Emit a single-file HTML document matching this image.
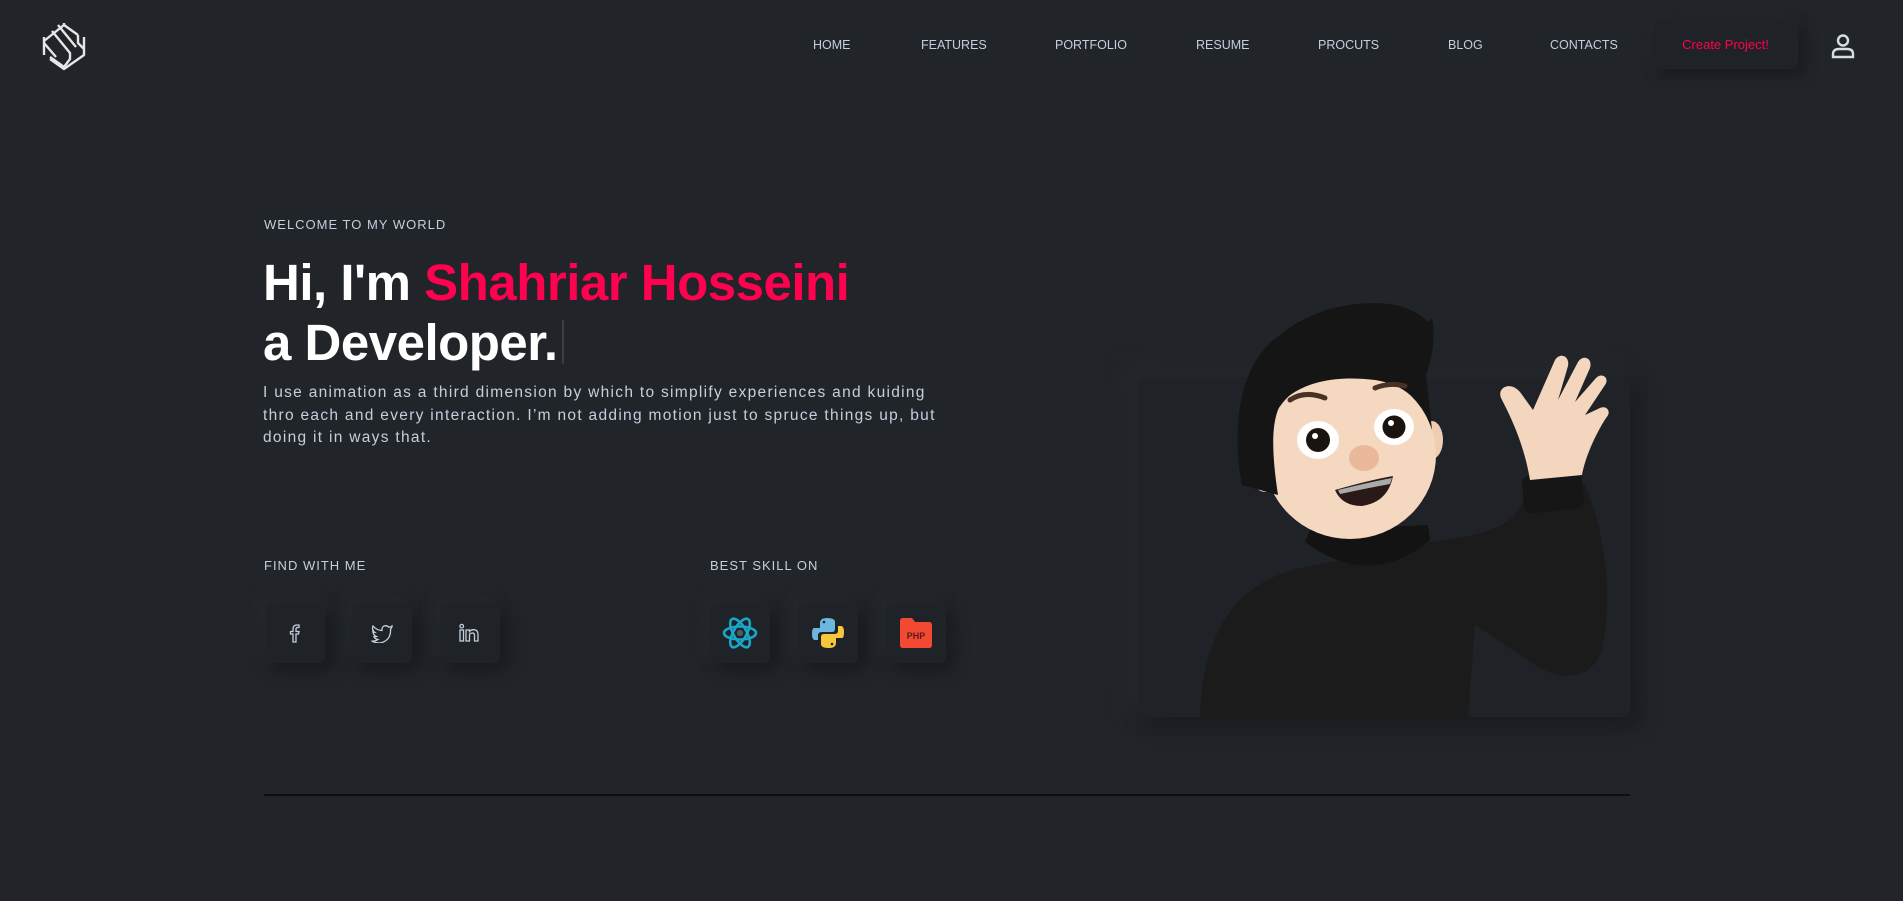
<!DOCTYPE html>
<html><head><meta charset="utf-8"><style>
*{margin:0;padding:0;box-sizing:border-box}
body{width:1903px;height:901px;background:#212428;font-family:"Liberation Sans",sans-serif;position:relative;overflow:hidden;color:#c4cfde}
.nav a{position:absolute;top:38px;font-size:12.5px;color:#c4cfde;text-decoration:none}
.btn{position:absolute;left:1653px;top:21px;width:145px;height:48px;background:#1f2226;border-radius:6px;box-shadow:6px 6px 14px #191b1e,-4px -4px 12px #25282d;color:#ff014f;font-size:13px;text-align:center;line-height:48px}
.small{position:absolute;font-size:13px;letter-spacing:1px;color:#c4cfde}
h1{position:absolute;left:263px;top:253px;font-size:51px;line-height:60px;font-weight:600;color:#fff;letter-spacing:-.5px}
h1 span{color:#ff014f}
p.d{position:absolute;left:263px;top:382px;white-space:nowrap;font-size:15.5px;line-height:22.5px;color:#c4cfde;letter-spacing:1.3px}
.box{position:absolute;top:603px;width:60px;height:60px;background:#1f2226;border-radius:6px;box-shadow:8px 8px 16px #191b1e,-6px -6px 14px #262a2e;display:flex;align-items:center;justify-content:center}
</style></head><body>
<svg style="position:absolute;left:40px;top:21px" width="48" height="50" viewBox="0 0 48 50" fill="none" stroke="#e6e6e6" stroke-width="2.4" stroke-linejoin="round">
<path d="M4 16 L4 34 M4 20 L24 4 L38 14 M24 4 L24 2"/>
<path d="M12 10 L30 32 L30 38 L24 46 L10 36"/>
<path d="M18 4 L36 26 M44 16 L44 34 L24 48 L10 38"/>
<path d="M4 22 L16 36 M38 14 L38 22 L44 28"/>
</svg>
<div class="nav">
<a style="left:813px">HOME</a><a style="left:921px">FEATURES</a><a style="left:1055px">PORTFOLIO</a><a style="left:1196px">RESUME</a><a style="left:1318px">PROCUTS</a><a style="left:1448px">BLOG</a><a style="left:1550px">CONTACTS</a>
</div>
<div class="btn">Create Project!</div>
<svg style="position:absolute;left:1831px;top:33px" width="24" height="26" viewBox="0 0 24 26" fill="none" stroke="#d8dde4" stroke-width="2.4"><circle cx="12" cy="7.5" r="5"/><path d="M2 24 L2 21 Q2 16 8 16 L16 16 Q22 16 22 21 L22 24 Z"/></svg>

<div class="small" style="left:264px;top:217px">WELCOME TO MY WORLD</div>
<h1>Hi, I'm <span>Shahriar Hosseini</span><br>a Developer.<span style="display:inline-block;width:2px;height:44px;background:#3a3e44;vertical-align:-4px;margin-left:4px"></span></h1>
<p class="d">I use animation as a third dimension by which to simplify experiences and kuiding<br>thro each and every interaction. I’m not adding motion just to spruce things up, but<br>doing it in ways that.</p>

<div class="small" style="left:264px;top:558px">FIND WITH ME</div>
<div class="small" style="left:710px;top:558px">BEST SKILL ON</div>

<div class="box" style="left:265px"><svg width="16" height="20" viewBox="0 0 16 20" fill="none" stroke="#c4cfde" stroke-width="1.3"><path d="M6 19 L6 11 L3.5 11 L3.5 8.5 L6 8.5 L6 6 Q6 2 10 2 L12 2 L12 4.5 L10.5 4.5 Q9 4.5 9 6 L9 8.5 L12 8.5 L11.5 11 L9 11 L9 19 Z"/></svg></div>
<div class="box" style="left:352px"><svg width="24" height="20" viewBox="0 0 24 20" fill="none" stroke="#c4cfde" stroke-width="1.3"><path d="M22 3 Q20.5 4 19 4.3 Q17 2 14 3 Q11.5 4.5 12 7.5 Q7 7.5 3 3 Q1.5 7 5 9.5 Q3.5 9.5 3 9 Q3.5 12.5 6.5 13.5 Q5 14 4 13.8 Q5 16 8 16.5 Q5 18.5 1.5 18 Q12 23 18.5 15 Q21 11 20.5 6 Q22 5 22 3 Z"/></svg></div>
<div class="box" style="left:440px"><svg width="24" height="20" viewBox="0 0 24 20" fill="none" stroke="#c4cfde" stroke-width="1.3"><rect x="2" y="7" width="3.5" height="11"/><circle cx="3.7" cy="3.2" r="1.8"/><path d="M8 18 L8 7 L11.5 7 L11.5 8.5 Q13 6.5 16 6.7 Q20 7 20 11.5 L20 18 L16.5 18 L16.5 12 Q16.5 10 14.5 10 Q11.5 10 11.5 12.5 L11.5 18 Z"/></svg></div>

<div class="box" style="left:710px"><svg width="36" height="36" viewBox="0 0 36 36" fill="none" stroke="#1aa6c9" stroke-width="2.6"><ellipse cx="18" cy="18" rx="16" ry="6.5"/><ellipse cx="18" cy="18" rx="16" ry="6.5" transform="rotate(60 18 18)"/><ellipse cx="18" cy="18" rx="16" ry="6.5" transform="rotate(-60 18 18)"/><circle cx="18" cy="18" r="3.2" fill="#4a5a66" stroke="none"/></svg></div>
<div class="box" style="left:798px"><svg width="36" height="36" viewBox="0 0 36 36"><path d="M17 3 Q10 3 10 8 L10 13 L4 13 Q2 13 2 19 Q2 25 5 25 L8 25 L8 20 Q8 17 12 17 L22 17 Q25 17 25 14 L25 7 Q25 3 17 3 Z" fill="#6cb6e0"/><path d="M19 33 Q26 33 26 28 L26 23 L32 23 Q34 23 34 17 Q34 11 31 11 L28 11 L28 16 Q28 19 24 19 L14 19 Q11 19 11 22 L11 29 Q11 33 19 33 Z" fill="#f6c73a"/><circle cx="14" cy="7" r="1.3" fill="#1f2226"/><circle cx="22" cy="29" r="1.3" fill="#1f2226"/></svg></div>
<div class="box" style="left:886px"><svg width="36" height="34" viewBox="0 0 36 34"><path d="M2 5 Q2 2 5 2 L14 2 L17 6 L31 6 Q34 6 34 9 L34 29 Q34 32 31 32 L5 32 Q2 32 2 29 Z" fill="#f24a32"/><text x="18" y="23" text-anchor="middle" font-family="Liberation Sans,sans-serif" font-weight="bold" font-size="9" fill="#5a1a12">PHP</text></svg></div>

<div style="position:absolute;left:1138px;top:377px;width:492px;height:340px;background:#1f2226;border-radius:6px;box-shadow:10px 10px 20px #1a1c1f,-10px -10px 24px #262a2e"></div>
<svg style="position:absolute;left:1130px;top:280px" width="510" height="450" viewBox="0 0 510 450">
<path d="M70 437 C72 360 100 305 170 288 L300 262 C350 255 385 250 395 215 L455 205 C478 260 482 320 472 370 C462 400 430 402 405 385 L345 345 L338 437 Z" fill="#1b1b1c"/>
<rect x="393" y="193" width="60" height="38" rx="8" transform="rotate(-6 423 212)" fill="#161616"/>
<path d="M175 262 Q240 310 300 260 L298 245 L180 250 Z" fill="#131313"/>
<path d="M400 200 C395 170 385 145 372 120 C365 108 380 100 390 112 L403 130 L425 80 C430 72 440 76 438 86 L428 120 L448 82 C453 74 463 78 460 88 L445 122 L466 98 C472 92 480 98 475 105 L455 135 L470 128 C477 125 482 132 476 138 C465 155 455 178 452 195 Z" fill="#f3d6bd"/>
<ellipse cx="135" cy="190" rx="15" ry="22" fill="#efcdb2"/>
<ellipse cx="302" cy="160" rx="11" ry="19" fill="#efcdb2"/>
<ellipse cx="220" cy="175" rx="86" ry="84" fill="#f4d8c0"/>
<path d="M112 205 C100 140 112 80 150 55 C180 30 220 20 260 24 C285 28 296 40 298 42 L302 38 C306 55 302 80 296 95 L302 150 C292 120 275 105 245 100 C205 95 172 102 152 122 C140 140 142 175 148 215 Z" fill="#151515"/>
<path d="M160 120 Q175 110 195 118" stroke="#4a3126" stroke-width="5" fill="none" stroke-linecap="round"/>
<path d="M245 108 Q260 102 275 106" stroke="#4a3126" stroke-width="5" fill="none" stroke-linecap="round"/>
<ellipse cx="188" cy="160" rx="21" ry="19" fill="#fff"/><circle cx="188" cy="160" r="12" fill="#1a1410"/><circle cx="185" cy="156" r="3" fill="#fff"/>
<ellipse cx="264" cy="147" rx="20" ry="18" fill="#fff"/><circle cx="264" cy="147" r="11.5" fill="#1a1410"/><circle cx="261" cy="143" r="3" fill="#fff"/>
<ellipse cx="234" cy="178" rx="15" ry="13" fill="#eab99a"/>
<path d="M205 210 Q240 200 263 196 Q258 222 232 226 Q212 226 205 210 Z" fill="#2a1a17"/>
<path d="M208 210 Q240 202 262 198 L260 204 Q238 208 210 214 Z" fill="#aaa"/>
</svg>

<div style="position:absolute;left:264px;top:794px;width:1366px;height:2px;background:#0d0e10"></div>
</body></html>
